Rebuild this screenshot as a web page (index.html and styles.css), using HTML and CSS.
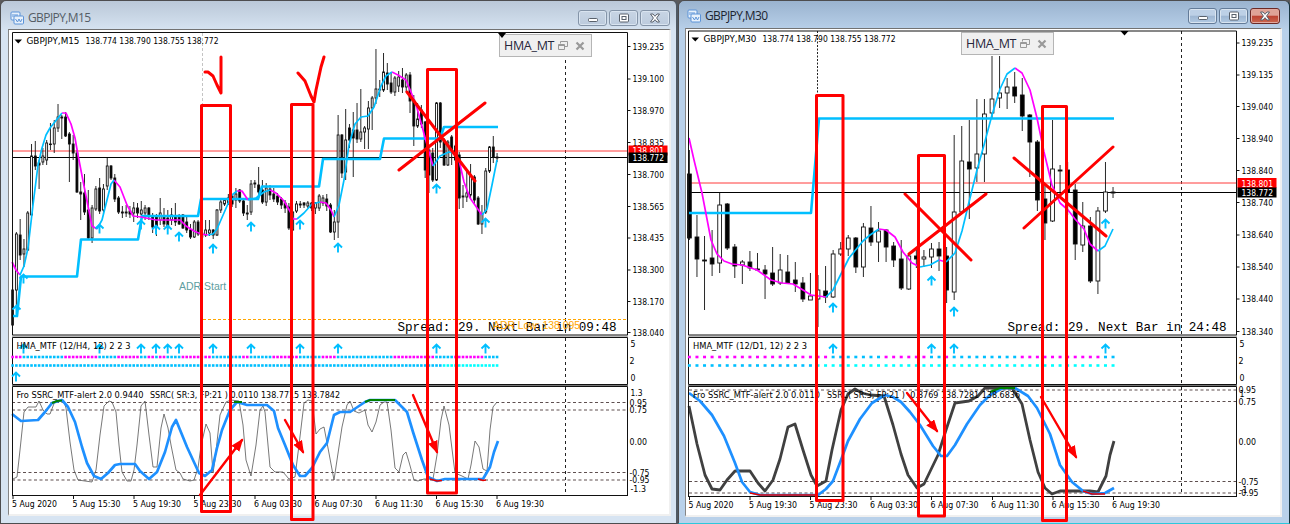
FILE: index.html
```
<!DOCTYPE html>
<html lang="en">
<head>
    <meta charset="UTF-8">
    <title>GBPJPY charts</title>
    <link rel="stylesheet" href="styles.css">
</head>
<body>
    <div class="desktop">
        <section class="window left">
            <header class="titlebar">
                <svg class="app-icon" width="14" height="14" viewBox="0 0 14 14">
                    <rect x="1" y="1" width="9" height="8" rx="1"/>
                    <path d="M3 6V3M5 5V3M7 6V3"/>
                    <rect x="4" y="5" width="9.500" height="8" rx="1"/>
                    <path d="M5.500 8l2 3 1.500-3 1.500 3 1.500-3"/>
                </svg>
                <h1>GBPJPY,M15</h1>
                <div class="buttons">
                    <span class="btn"><svg width="12" height="10"><rect x="1.500" y="5.500" width="9" height="3" rx="1"/></svg></span>
                    <span class="btn"><svg width="12" height="10"><rect x="1.500" y="1" width="9" height="8" rx="1"/><rect x="4" y="3.500" width="4" height="3"/></svg></span>
                    <span class="btn close"><svg width="12" height="10"><path d="M1.500 1h2.500l2 2.300L8 1h2.500L7.600 5l2.900 4H8L6 6.700 4 9H1.500l2.900-4z"/></svg></span>
                </div>
            </header>
            <div class="client">
                <svg id="m15" class="chart" viewBox="9 30 661 484" width="661" height="484">
                    <path class="daysep" d="M202.500 33V105"/>
                    <path class="period" d="M565.500 60V335M565.500 338V384M565.500 387V495"/>
                    <path class="ask" d="M12 151H627"/>
                    <path class="bid" d="M12 157.500H627"/>
                    <g class="candles"></g>
                    <path class="step" d="M13 316H17L21 276.500H77L81 239.500H138L142 216H198L201 199H258L262 186.500H319L323 159H380L384 138.500H440L444 127H498"/>
                    <path class="hma down" d="M12 262L16 270L20 275M62 113L66 113L71 124L75 138L78 155L84 186L88 206L92 226L97 229M114 180L120 187L127 205L133 216L141 217L156 220H180L186 226L194 231L201 234L208 235M237 191L242 191L248 200M270 190L276 193L284 201L291 213L293 219H297M320 202L326 203L331 210L334 217M392 72L398 75L406 80L411 92L417 108L423 130L429 152L433 166M453 153L459 160L464 182L470 198L482 215"/>
                    <path class="hma up" d="M20 275L24 266L28 248L33 205L38 165L42 148L46 135L50 128L62 113M97 229L102 220L108 196L111 184L114 180M208 235L213 234L217 229L227 206L232 195L237 191M248 200L256 198L264 192L270 190M297 219L304 213L312 204L320 202M334 217L339 205L344 180L349 145L355 124L361 117L368 116L374 107L381 86L386 76L392 72M433 166L440 156L449 152L453 153M482 215L487 209L492 185L497 160"/>
                    <path class="adr" d="M203 319.500H627"/>
                    <path class="level" d="M12 402.500H627M12 410H627M12 472.500H627M12 480H627"/>
                    <path class="fast" d="M13 479L17 477L20 450L24 412L28 407H36L39 401L43 410L47 414H50L55 401L60 400L64 402L66 408L70 442L74 470L78 480L92 482L96 470L100 435L104 406L109 401L112 402L116 412L119 445L122 472L127 481H131L134 470L137 445L141 406L145 401L149 435L153 467H157L161 428L164 414L168 428L171 445L176 470L180 473L183 479L190 481L194 480L198 468L201 446L206 424L210 433L213 473L215 460L220 415L226 402L231 400L239 401L243 425L246 460L251 476L256 445L260 410L263 406L265 412L270 467L275 472H283L289 479L295 477L299 445L304 403L308 400L312 401L316 434L320 429L324 427L328 448L334 480L337 460L342 427L347 405L350 401L354 411L359 413L365 410L368 425L372 432L376 422L380 405L384 402H387L391 430L395 468L399 472L403 455L406 452L409 462L414 480L418 481L424 479H433L437 455L441 420L444 406L449 425L455 473L462 476L468 479L471 465L475 441L479 447L483 469L487 471L490 430L493 407L497 402"/>
                    <path class="slow" d="M12 414L21 421L38 420L45 412L52 403L62 400L68 407L75 422L82 447L87 463L94 476L101 479L108 473L115 465L120 464H135L140 471L149 479L157 472L165 452L172 427L176 420L187 447L199 473L205 476L212 470L217 448L222 430L230 410L237 402L247 405H267L274 411L278 428L285 445L293 465L300 476H305L312 468L320 452L327 443L334 415L340 412H350L365 402L370 400H395L407 412L413 432L422 460L428 477L437 481L445 479H483L490 467L494 452L498 441"/>
                    <path class="top" d="M52 403L57 401L62 400.500M234 402H242M365 402L370 400H395"/>
                    <path class="bottom" d="M430 479L437 481L442 480.500M478 479L483 480.500L486 480"/>
                    <path class="frame" d="M12.500 495V386.500H627.500V495M12 495.500H628M12.500 384.500V337.500H627.500V384.500ZM12.500 335V32.500H627.500V335ZM13 495v4M73.500 495v4M134 495v4M194.500 495v4M255 495v4M315.500 495v4M376 495v4M436.500 495v4M497 495v4"/>
                    <path class="divider" d="M12 336H628M12 385.500H628"/>
                    <path class="marker" d="M14.500 39.500h7.500l-3.700 4z"/>
                    <text class="adr-start" x="179" y="290">ADR Start</text>
                    <text class="spread" x="397.500" y="331" textLength="219">Spread: 29. Next Bar in 09:48</text>
                    <text class="adr-low" x="493" y="329" textLength="87">ADR Low: 138.095</text>
                    <g class="labels"></g>
                </svg>
            </div>
            <div class="mini"><b>HMA_MT</b><svg width="12" height="11"><path d="M3.500 3.500V1.500h7v5H8M1.500 4.500h6v5h-6zM1.500 5.500h6"/></svg><svg width="10" height="10"><path class="x" d="M1.500 1.500l7 7M8.500 1.500l-7 7"/></svg></div>
        </section>

        <section class="window right">
            <header class="titlebar">
                <svg class="app-icon" width="14" height="14" viewBox="0 0 14 14">
                    <rect x="1" y="1" width="9" height="8" rx="1"/>
                    <path d="M3 6V3M5 5V3M7 6V3"/>
                    <rect x="4" y="5" width="9.500" height="8" rx="1"/>
                    <path d="M5.500 8l2 3 1.500-3 1.500 3 1.500-3"/>
                </svg>
                <h1>GBPJPY,M30</h1>
                <div class="buttons">
                    <span class="btn"><svg width="12" height="10"><rect x="1.500" y="5.500" width="9" height="3" rx="1"/></svg></span>
                    <span class="btn"><svg width="12" height="10"><rect x="1.500" y="1" width="9" height="8" rx="1"/><rect x="4" y="3.500" width="4" height="3"/></svg></span>
                    <span class="btn close"><svg width="12" height="10"><path d="M1.500 1h2.500l2 2.300L8 1h2.500L7.600 5l2.900 4H8L6 6.700 4 9H1.500l2.900-4z"/></svg></span>
                </div>
            </header>
            <div class="client">
                <svg id="m30" class="chart" viewBox="686 29 594 486" width="594" height="486">
                    <path class="period tight" d="M817.500 31V335M817.500 338V384M817.500 387V495"/>
                    <path class="period" d="M1181.500 31V335M1181.500 338V384M1181.500 387V495"/>
                    <path class="ask" d="M689 183H1236"/>
                    <path class="bid" d="M689 192.500H1236"/>
                    <g class="candles"></g>
                    <path class="step" d="M689 213H811L819 118.500H1114"/>
                    <path class="hma down" d="M689 138L694 160L702 193L711 240L717 254L724 261L732 264L742 265L757 270L771 280L782 283L793 284L803 290L811 295L826 297M879 229L886 230L895 237L903 252L912 263L920 267M939 260L946 262M1015 68L1022 73L1030 90L1037 118L1044 152L1052 185L1060 203L1068 210L1075 219L1084 229L1090 244L1098 251"/>
                    <path class="hma up" d="M826 297L833 290L841 274L849 258L863 241L870 235L879 229M920 267L930 265L939 260M946 262L955 253L962 231L970 198L977 170L984 145L992 115L1000 89L1007 74L1015 68M1098 251L1105 246L1113 229"/>
                    <path class="level" d="M689 390H1236M689 401.500H1236M689 481.500H1236M689 493H1236"/>
                    <path class="fast thick" d="M689 406L697 444L705 475L712 489L720 490L727 480L735 471H750L758 483L765 491L773 480L780 459L788 427L795 424L803 450L811 475L817 486L826 481L832 450L841 410L848 394L855 389L862 393L870 395L884 396L893 425L901 454L908 475L917 488L924 484L938 455L946 430L955 403L969 401L978 396L985 388L1012 388L1022 404L1030 440L1038 472L1045 488L1052 494L1060 491H1090L1098 492L1106 476L1110 455L1114 441"/>
                    <path class="slow" d="M689 393L700 401L712 415L724 436L735 463L742 482L750 492L760 495H818L826 489L833 481L841 460L848 441L860 419L872 403L885 395L893 397L901 402L910 412L920 425L933 446L941 456L947 456L955 445L967 424L980 405L990 395L1003 388H1015L1028 396L1037 408L1050 434L1060 465L1072 482L1083 491L1092 494L1105 493L1114 488"/>
                    <path class="top" d="M990 392L1000 388H1015"/>
                    <path class="bottom" d="M750 493L760 495H818M1083 491L1092 494H1105"/>
                    <path class="frame" d="M688.500 496V386.500H1236.500V496M688 496.500H1237M688.500 384.500V337.500H1236.500V384.500ZM688.500 335V31H1236.500V335ZM689.500 496v4M750 496v4M810.500 496v4M871 496v4M931.500 496v4M992.500 496v4M1053 496v4M1113.500 496v4"/>
                    <path class="divider" d="M688 336H1237M688 385.500H1237"/>
                    <path class="marker" d="M1120.500 31h8l-4 4.500zM691.500 37.500h7.500l-3.700 4z"/>
                    <text class="spread" x="1007.500" y="331" textLength="219">Spread: 29. Next Bar in 24:48</text>
                    <g class="labels"></g>
                </svg>
            </div>
            <div class="mini"><b>HMA_MT</b><svg width="12" height="11"><path d="M3.500 3.500V1.500h7v5H8M1.500 4.500h6v5h-6zM1.500 5.500h6"/></svg><svg width="10" height="10"><path class="x" d="M1.500 1.500l7 7M8.500 1.500l-7 7"/></svg></div>
        </section>

        <!-- hand-drawn notes over both charts -->
        <svg class="notes" width="1290" height="524">
            <defs>
                <marker id="head" markerUnits="userSpaceOnUse" markerWidth="14" markerHeight="12" refX="11" refY="5" orient="auto">
                    <path d="M0 0L13 5L0 10Z"/>
                </marker>
            </defs>
            <rect x="201.500" y="105.500" width="29" height="406"/>
            <rect x="291.500" y="104.500" width="21.500" height="415"/>
            <rect x="427.500" y="69.500" width="29" height="423.500"/>
            <rect x="816.500" y="95.500" width="26.500" height="405"/>
            <rect x="918.500" y="155.500" width="26" height="360.500"/>
            <rect x="1042.500" y="106.500" width="24" height="414"/>
            <path d="M205 72H208L213 76L217 85L221 93V57M298 73L305 81L311 96L314 102L316 90L321 67L324 57"/>
            <path d="M399 170L485 103M407 92L475 181M905 194L971 260M909 254L986 194M1014 158L1106 236M1024 228L1113 147"/>
            <path class="arrow" d="M200 495L242 440"/>
            <path class="arrow" d="M285 420L303 452"/>
            <path class="arrow" d="M413 395L437 452"/>
            <path class="arrow" d="M907 393L937 431"/>
            <path class="arrow" d="M1041 397L1076 457"/>
        </svg>
    </div>
    <script src="script.js"></script>
</body>
</html>
```
FILE: styles.css
```
* {
    box-sizing: border-box;
}
body {
    margin: 0;
    overflow: hidden;
    background: #5b5b5d;
    font-family: "DejaVu Sans Condensed", "DejaVu Sans", sans-serif;
}
.desktop {
    position: relative;
    display: flex;
    width: 1290px;
    height: 524px;
}
.window {
    position: relative;
    display: flex;
    flex-direction: column;
    border: 1px solid #4d4d4f;
    border-radius: 6px 6px 0 0;
}
.left {
    width: 678px;
    padding: 0 5px 0 7px;
    background: linear-gradient(#bac8d8, #d7e4f2 30px);
    border-right: 2px solid #505963;
}
.right {
    width: 612px;
    padding: 0 7px 0 6px;
    background: linear-gradient(#9ab3cf, #b9d1ea 30px);
    border-right-color: #17343f;
    border-bottom-color: #2cc8dc;
}
.titlebar {
    display: flex;
    align-items: center;
    height: 28px;
    padding: 5px 1px 0 2px;
}
.right .titlebar {
    height: 27px;
    padding: 2px 2px 0 2px;
}
.titlebar h1 {
    margin: 0 0 0 4px;
    font: 12px "Open Sans", sans-serif;
    letter-spacing: -0.6px;
    color: #555d66;
}
.right .titlebar h1 {
    color: #1c2530;
}
.app-icon {
    fill: #e8f1fb;
    stroke: #5b93d8;
}
.buttons {
    display: flex;
    gap: 2px;
    margin-left: auto;
}
.btn {
    display: flex;
    align-items: center;
    justify-content: center;
    width: 29px;
    height: 16px;
    border: 1px solid #8494a8;
    border-radius: 3px;
    background: linear-gradient(#c8d5e4, #bccbdd);
    box-shadow: inset 0 0 0 1px #d9e4f0;
}
.close {
    width: 30px;
}
.right .btn {
    border-color: #637b98;
    background: linear-gradient(#bdd0e6 45%, #9eb6d2 50%, #b2cae3);
}
.btn svg {
    fill: #fff;
    stroke: #59616c;
}
.right .close {
    border-color: #6c2a26;
    background: linear-gradient(#dfa397 45%, #bd4231 50%, #ca6850);
    box-shadow: inset 0 0 0 1px #e2a99f;
}
.client {
    flex: none;
    height: 487px;
    background: #fff;
    border: solid #f0f0f0;
    border-width: 1px 2px 2px 1px;
    border-top-color: #727272;
    border-left-color: #858585;
    overflow: hidden;
}
.right .client {
    height: 489px;
}
.chart {
    display: block;
    fill: none;
}
.chart text {
    font-size: 9.2px;
    fill: #000;
}
.ask { stroke: #ff3b3b; }
.bid { stroke: #000; stroke-width: 1.1; }
.daysep { stroke: #c4c4c4; stroke-dasharray: 3 2; }
.period { stroke: #222; stroke-dasharray: 3 3; }
.tight { stroke-dasharray: 2 1.5; }
.adr { stroke: #ffa500; stroke-dasharray: 3 2; stroke-width: 1.2; }
.level { stroke: #4c3b3b; stroke-dasharray: 3 2.5; stroke-width: 0.9; }
.candles { stroke: #111; }
.candles .bear { fill: #000; }
.candles .bull { fill: #fff; }
.step { stroke: #00bfff; stroke-width: 2.6; stroke-linejoin: round; }
.hma { stroke-width: 1.7; stroke-linejoin: round; }
.up { stroke: #00bfff; }
.down { stroke: #f0f; }
.fast { stroke: #555; stroke-width: 0.8; }
.thick { stroke: #404040; stroke-width: 2.8; stroke-linejoin: round; }
.slow { stroke: #1e90ff; stroke-width: 2.7; stroke-linejoin: round; }
.top { stroke: #008000; stroke-width: 2.2; }
.bottom { stroke: #e60000; stroke-width: 1.6; }
.frame { stroke: #111; }
.divider { stroke: #777; stroke-width: 1; }
.marker { fill: #000; }
.signal { stroke: #00bfff; stroke-width: 1.9; }
.chart .adr-start { font: 10.5px "Liberation Sans", sans-serif; fill: #5f9ea0; }
.chart .adr-low { font: 10.5px "Liberation Sans", sans-serif; fill: #ffa500; }
.chart .spread { font: 12.6px "Liberation Mono", monospace; }
.chart .on-tag { fill: #fff; }
.mini {
    position: absolute;
    display: flex;
    align-items: center;
    left: 498px;
    top: 33px;
    width: 93px;
    height: 23px;
    padding-left: 4px;
    background: #f0f0f0;
    border: 1px solid #b5b5b5;
}
/* chart shift marker on the pane's top edge */
.left .mini::before {
    content: "";
    position: absolute;
    left: -2px;
    top: -2px;
    border: solid transparent;
    border-width: 5px 4.5px 0;
    border-top-color: #000;
}
.right .mini {
    left: 282px;
    top: 31px;
}
.mini b {
    flex: none;
    width: 53px;
    font: 12.5px "Open Sans", sans-serif;
    letter-spacing: -0.3px;
    color: #26263a;
}
.mini svg {
    flex: none;
    margin-right: 6px;
    fill: none;
    stroke: #999;
}
.mini .x {
    stroke-width: 2.2;
}
.notes {
    position: absolute;
    left: 0;
    top: 0;
    fill: none;
    stroke: #f00;
    stroke-width: 3;
    stroke-linejoin: round;
    stroke-linecap: round;
}
.notes marker path {
    fill: #f00;
    stroke: none;
}
.arrow {
    stroke-width: 2.4;
    marker-end: url(#head);
}
```
FILE: script.js
```
// candle: [high, body top, body bottom, low, 1 = bear / 0 = bull]
const m15Candles = [
    [262,290,325,326,0],[232,234,290,310,0],[219,235,255,260,1],[239,249,254,267,0],[211,213,250,251,0],[144,156,215,216,0],
    [141,156,166,170,1],[160,163,165,189,1],[148,156,162,165,0],[140,143,160,165,0],[123,144,144,150,1],[120,128,144,153,0],
    [104,117,128,132,0],[115,117,118,139,1],[112,117,136,137,1],[132,134,144,182,1],[135,144,153,160,1],[150,153,192,193,1],
    [182,192,194,220,1],[174,193,212,215,1],[190,210,238,239,1],[205,208,238,243,0],[186,189,209,211,0],[178,188,211,214,1],
    [184,189,210,214,0],[158,166,186,190,0],[165,166,178,180,1],[174,178,199,202,1],[196,198,212,214,1],[206,212,213,218,1],
    [205,212,213,217,1],[206,211,214,218,1],[202,208,213,222,0],[203,208,213,218,1],[201,210,214,217,0],[205,208,213,220,0],
    [207,208,215,220,1],[213,217,227,233,1],[214,217,227,236,1],[198,213,220,225,0],[208,216,224,227,1],[210,218,226,229,1],
    [208,215,220,225,0],[203,217,222,226,1],[214,217,224,225,1],[214,215,228,229,1],[216,222,230,233,1],[224,230,237,239,1],
    [220,222,237,238,0],[220,222,234,236,1],[225,233,237,239,1],[220,230,235,237,0],[220,230,233,236,0],[229,230,235,239,1],
    [209,210,235,236,0],[199,202,210,213,0],[198,200,204,206,0],[194,198,203,205,0],[194,196,204,207,1],[188,194,200,208,0],
    [189,190,201,203,1],[198,201,213,216,1],[205,213,214,220,1],[180,184,212,215,0],[180,183,184,188,1],[167,185,192,198,1],
    [180,190,202,204,1],[183,188,202,206,0],[185,189,195,200,1],[188,194,199,202,1],[193,196,202,205,1],[197,199,205,209,1],
    [200,203,208,213,1],[203,207,228,230,1],[211,212,230,231,0],[201,204,211,213,0],[201,204,205,208,1],[202,203,205,208,1],
    [201,203,206,208,0],[202,203,208,211,1],[202,203,208,214,0],[194,196,208,211,0],[195,198,203,206,0],[194,199,206,211,1],
    [203,205,232,233,1],[210,222,232,240,0],[115,135,222,238,0],[134,135,173,178,1],[109,140,172,180,0],[124,128,140,148,1],
    [112,130,138,177,1],[103,130,139,143,1],[89,132,139,142,0],[126,128,132,149,0],[101,108,129,149,0],[96,98,108,130,0],
    [49,89,98,104,0],[80,89,90,97,1],[53,72,90,92,0],[63,73,84,90,1],[72,83,92,94,1],[76,78,92,96,0],[71,77,86,92,0],
    [68,80,87,93,1],[73,75,87,92,0],[72,75,101,113,1],[95,100,126,146,1],[103,119,126,128,0],[105,110,124,128,1],
    [121,122,170,178,1],[148,150,175,193,1],[148,153,180,182,1],[102,103,180,181,0],[102,103,142,148,1],[138,140,165,166,1],
    [140,142,165,166,0],[135,137,150,165,1],[144,146,160,163,1],[152,155,198,209,1],[185,196,197,208,1],[170,193,197,202,0],
    [164,176,195,199,0],[175,177,200,204,1],[196,198,224,225,1],[205,214,224,234,0],[168,171,212,214,0],[146,147,171,173,0],
    [136,147,157,163,1],[153,157,158,162,1]
];
const m30Candles = [
    [150,174,238,240,1],[215,237,259,277,1],[236,260,261,310,1],[230,258,264,276,1],[193,205,263,273,0],[203,204,248,250,1],
    [244,247,266,278,1],[260,262,265,284,0],[251,262,268,271,1],[253,269,270,271,1],[265,270,274,299,1],[247,273,284,286,1],
    [254,270,283,285,0],[255,272,283,284,1],[262,280,284,292,1],[277,283,299,302,1],[273,296,300,300,0],[275,290,299,327,0],
    [266,291,297,303,1],[250,254,297,298,0],[242,249,254,256,0],[235,238,249,256,0],[237,238,267,273,1],[223,227,267,277,0],
    [206,228,242,246,1],[222,231,242,262,0],[229,230,247,262,1],[242,246,260,267,1],[240,259,288,290,1],[254,256,289,290,0],
    [250,256,259,268,1],[250,257,259,267,0],[243,249,257,268,0],[242,249,256,271,1],[247,256,290,303,1],[135,212,292,300,0],
    [126,161,212,213,0],[120,162,169,219,1],[99,154,168,182,0],[99,114,154,182,0],[56,99,113,119,0],[56,93,98,108,0],
    [78,87,93,109,0],[72,87,96,103,1],[78,95,116,131,1],[114,115,142,177,1],[140,142,200,211,1],[185,199,223,240,1],
    [120,169,221,222,0],[165,170,171,196,1],[162,170,192,215,1],[184,190,244,260,1],[202,226,245,252,0],[217,226,281,283,1],
    [207,211,281,294,0],[162,192,211,213,0],[187,192,193,198,1]
];

function add(parent, tag, attrs, text) {
    const el = document.createElementNS('http://www.w3.org/2000/svg', tag);
    for (const key in attrs) el.setAttribute(key, attrs[key]);
    if (text) el.textContent = text;
    parent.appendChild(el);
}

function label(g, x, y, width, text, cls) {
    add(g, 'text', { x, y, textLength: width, lengthAdjust: 'spacingAndGlyphs', class: cls || 'label' }, text);
}

function drawChart(c) {
    const root = document.getElementById(c.id);
    const candles = root.querySelector('.candles');
    const g = root.querySelector('.labels');

    c.candles.forEach(([high, top, bottom, low, bear], i) => {
        const x = c.x0 + i * c.step;
        add(candles, 'path', { d: `M${x} ${high}V${low}`, 'stroke-width': 0.9 });
        const h = Math.max(bottom - top, 0.6);
        add(candles, 'rect', { x: x - c.body / 2, y: top, width: c.body, height: h, class: bear ? 'bear' : 'bull', 'stroke-width': 0.9 });

        const down = c.down.some(([a, b]) => x >= a && x <= b);
        add(g, 'rect', { x: x - c.dot / 2, y: 355.7, width: c.dot, height: 2.6, fill: down ? '#f0f' : '#00bfff' });
        add(g, 'rect', { x: x - c.dot / 2, y: 364.2, width: c.dot, height: 2.6, fill: x < c.cyanFrom ? '#00bfff' : '#0ff' });
    });

    c.signals.forEach(([x, y]) => {
        add(g, 'path', { class: 'signal', d: `M${x} ${y + 10.5}V${y + 1}M${x - 4} ${y + 5.5}L${x} ${y + 1.5}L${x + 4} ${y + 5.5}` });
    });

    c.prices.forEach(([text, y]) => {
        add(g, 'path', { d: `M${c.axis} ${y}h3`, stroke: '#111' });
        label(g, c.axis + 5, y + 3.4, 31.5, text);
    });
    c.tags.forEach(([text, y, h, fill]) => {
        add(g, 'rect', { x: c.axis + 1, y, width: 39, height: h, fill });
        label(g, c.axis + 5, y + 8.5, 31.5, text, 'on-tag');
    });
    c.levels.forEach(([text, y, width, dx]) => label(g, c.axis + dx, y + 3.4, width, text));
    c.dates.forEach(([text, x]) => label(g, x, c.dateY, text.includes(':') ? 48 : 45, text));
    c.titles.forEach(([text, x, y, width]) => label(g, x, y, width, text));
}

drawChart({
    id: 'm15', candles: m15Candles, x0: 12.6, step: 3.785, body: 1.9, dot: 2.6, axis: 627.5, dateY: 507, cyanFrom: 441,
    down: [[12,21],[63,97],[116,138],[146,155],[158,166],[180,200],[203,211],[242,248],[271,297],[320,336],[393,434],[454,483]],
    signals: [[16.5,304],[23.5,273],[99.5,223],[141,219],[156,224],[167.7,224],[179,231],[213,243],[251,221],[300,219],[338,242],[436.5,183],[485.5,217],
        [23.5,343],[99.5,343],[141,343],[156,343],[167.7,343],[179,343],[213,343],[251,343],[300,343],[338,343],[436.5,343],[485.5,343],[16,371]],
    prices: [['139.235',46.5],['139.100',79],['138.970',110.5],['138.835',142.5],['138.700',174.5],['138.565',206.5],['138.435',238],['138.300',270],['138.170',301.5],['138.040',332.5]],
    tags: [['138.801',145.5,10,'#f00'],['138.772',152.5,10.5,'#000']],
    levels: [['5',343.5,5,3],['2',361,5,2],['0',378,5,3],['1.3',393,12,3],['0.95',402.5,17.5,2],['0.75',410,17.5,2],['0.00',441.5,17.5,2],['-0.75',472.5,20,2],['-0.95',480,20,2],['-1.3',489,15.5,3]],
    dates: [['5 Aug 2020',12],['5 Aug 15:30',72.5],['5 Aug 19:30',133],['5 Aug 23:30',193.5],['6 Aug 03:30',254],['6 Aug 07:30',314.5],['6 Aug 11:30',375],['6 Aug 15:30',435.5],['6 Aug 19:30',496]],
    titles: [['GBPJPY,M15',26.5,43.7,53],['138.774 138.790 138.755 138.772',85.5,43.7,133],['HMA_MTF (12/H4, 12) 2 2 3',16.5,349,114],
        ['Fro SSRC_MTF-alert 2.0 0.9440',16.5,398.3,127],['SSRC( SR:3, FP:21 ) 0.0110 138.7715 138.7842',150,398.3,190]]
});

drawChart({
    id: 'm30', candles: m30Candles, x0: 689.4, step: 7.565, body: 3.8, dot: 3, axis: 1236.5, dateY: 508, cyanFrom: 812,
    down: [[688,826],[884,925],[945,948],[1020,1099]],
    signals: [[833,302],[931.5,275],[954,306],[1105.5,218],[833,343],[931.5,343],[954,343],[1105.5,343]],
    prices: [['139.235',43],['139.135',75],['139.040',106.5],['138.940',138.5],['138.840',170.5],['138.740',202.5],['138.640',235],['138.540',267],['138.440',299],['138.340',331.5]],
    tags: [['138.801',178,10,'#f00'],['138.772',187.5,10,'#000']],
    levels: [['5',343.5,5,3],['2',361,5,2],['0',378,5,3],['0.95',390,17.5,2],['1',394,5,3],['0.75',401.5,17.5,2],['0.00',441.5,17.5,2],['-0.75',481.5,20,2],['-1',489.5,8,3],['-0.95',493,20,2]],
    dates: [['5 Aug 2020',688.5],['5 Aug 19:30',749],['5 Aug 23:30',809.5],['6 Aug 03:30',870],['6 Aug 07:30',930.5],['6 Aug 11:30',991],['6 Aug 15:30',1051.5],['6 Aug 19:30',1112]],
    titles: [['GBPJPY,M30',703.5,41.7,53],['138.774 138.790 138.755 138.772',762.5,41.7,133],['HMA_MTF (12/D1, 12) 2 2 3',693,349,114],
        ['Fro SSRC_MTF-alert 2.0 0.0110',693,398.3,127],['SSRC( SR:3, FP:21 ) -0.8769 138.7281 138.6836',827,398.3,193]]
});
```
